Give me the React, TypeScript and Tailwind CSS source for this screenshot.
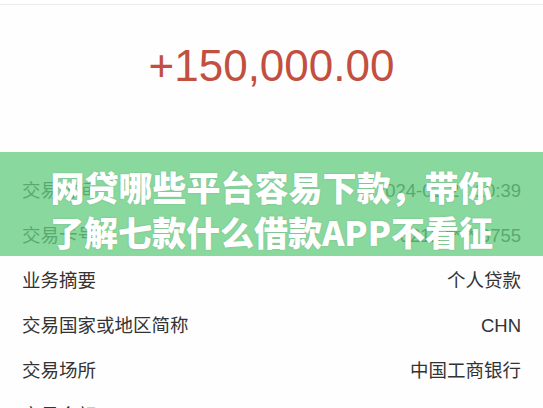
const rows = [
  { label: "交易时间", value: "2024-02-27 10:39" },
  { label: "交易卡号", value: "6212 **** 6755" },
  { label: "业务摘要", value: "个人贷款" },
  { label: "交易国家或地区简称", value: "CHN" },
  { label: "交易场所", value: "中国工商银行" },
  { label: "交易金额", value: "150,000.00" },
];

export default function App() {
  return (
    <div
      className="relative w-[543px] h-[408px] overflow-hidden bg-[#fefefe]"
      style={{ fontFamily: '"Liberation Sans", "Noto Sans CJK SC", sans-serif' }}
    >
      {/* top bar edge */}
      <div className="h-[5px] border-b border-[#ececec] bg-white" />

      {/* amount */}
      <div className="h-[163px] flex justify-center pt-[35px]">
        <span className="text-[44px] leading-[52px] text-[#c24f3f]">+150,000.00</span>
      </div>

      {/* detail rows */}
      <div className="flex flex-col px-[22px]">
        {rows.map((r) => (
          <div key={r.label} className="h-[45px] flex items-center justify-between text-[18.5px] text-[#333]">
            <span>{r.label}</span>
            <span>{r.value}</span>
          </div>
        ))}
      </div>

      {/* green title banner over the page */}
      <div className="absolute left-0 right-0 top-[152px] h-[104px] bg-[rgba(102,204,129,0.77)] pt-[12px] overflow-hidden">
        <div
          className="flex flex-col items-center text-white font-black text-[34px] leading-[45px] [text-shadow:0_0_2px_rgba(0,0,0,0.15)]"
          style={{ fontFamily: '"Noto Sans CJK SC", "Liberation Sans", sans-serif' }}
        >
          <span>网贷哪些平台容易下款，带你</span>
          <span>了解七款什么借款APP不看征</span>
        </div>
      </div>
    </div>
  );
}
